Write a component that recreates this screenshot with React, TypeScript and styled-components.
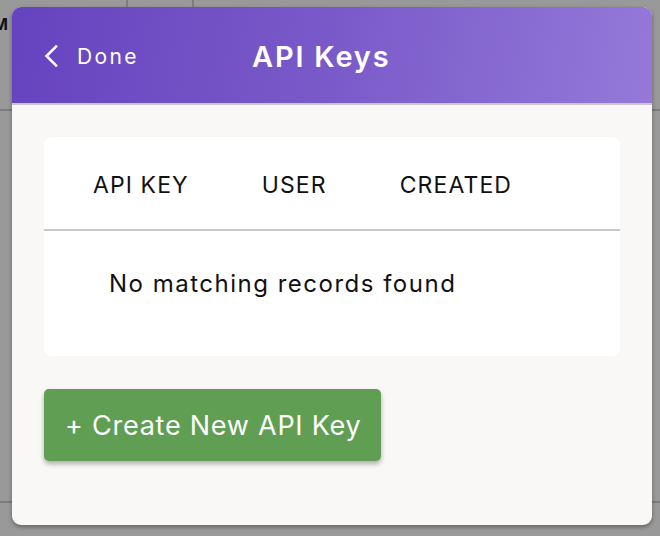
import React from "react";
import styled, { createGlobalStyle } from "styled-components";

const Global = createGlobalStyle`
  html, body { margin: 0; padding: 0; }
  body {
    width: 660px;
    height: 536px;
    overflow: hidden;
    background: #999999;
    font-family: Inter, "Noto Sans", sans-serif;
  }
`;

const Backdrop = styled.div`
  position: relative;
  width: 660px;
  height: 536px;
  background: #999999;
  overflow: hidden;
`;

const BgRule = styled.div<{ $top: number }>`
  position: absolute;
  left: 0;
  right: 0;
  top: ${(p) => p.$top}px;
  height: 2px;
  background: #7d7d7d;
`;

const BgCol = styled.div<{ $left: number }>`
  position: absolute;
  top: 0;
  left: ${(p) => p.$left}px;
  width: 2px;
  height: 10px;
  background: #7d7d7d;
`;

const BgLetter = styled.div`
  position: absolute;
  left: -7px;
  top: 14px;
  font-family: Inter, sans-serif;
  font-weight: 700;
  font-size: 16px;
  color: #111;
`;

const Modal = styled.div`
  position: absolute;
  left: 12px;
  top: 7px;
  width: 640px;
  height: 518px;
  border-radius: 9px;
  overflow: hidden;
  background: #f9f8f6;
  box-shadow: 0 2px 4px rgba(0, 0, 0, 0.35);
  display: flex;
  flex-direction: column;
`;

const Header = styled.header`
  height: 98px;
  flex-shrink: 0;
  box-sizing: border-box;
  border-bottom: 2px solid #c9c7cc;
  background: linear-gradient(100deg, #6643bf 0%, #7a5ac9 50%, #9479d9 100%);
  display: flex;
  align-items: center;
  padding: 2px 0 0 31px;
  color: #fff;
`;

const BackButton = styled.button`
  display: flex;
  align-items: center;
  gap: 18px;
  background: none;
  border: none;
  padding: 0;
  color: #fff;
  font-family: Inter, sans-serif;
  font-size: 21px;
  letter-spacing: 2.4px;
  cursor: pointer;
`;

const Title = styled.h1`
  margin: 0 0 0 113px;
  font-family: Inter, sans-serif;
  font-size: 29px;
  font-weight: 600;
  letter-spacing: 1.8px;
  color: #fff;
`;

const Body = styled.main`
  flex: 1;
  padding: 32px 32px 0 32px;
  display: flex;
  flex-direction: column;
  align-items: flex-start;
  gap: 33px;
`;

const Card = styled.section`
  align-self: stretch;
  background: #ffffff;
  border-radius: 8px;
  height: 219px;
`;

const HeadRow = styled.div`
  display: flex;
  align-items: center;
  height: 94px;
  padding: 3px 0 0 49px;
  box-sizing: border-box;
  gap: 73px;
  border-bottom: 2px solid #c8c8c8;
`;

const HeadCell = styled.div`
  font-family: Inter, sans-serif;
  font-size: 23px;
  font-weight: 400;
  letter-spacing: 1.1px;
  color: #111;
`;

const EmptyRow = styled.div`
  padding: 38px 0 0 65px;
  font-family: Inter, sans-serif;
  font-size: 24px;
  letter-spacing: 1.5px;
  color: #111;
`;

const CreateButton = styled.button`
  height: 72px;
  padding: 0 20px 0 21px;
  border: none;
  border-radius: 5px;
  background: #5f9e53;
  color: #fff;
  font-family: Inter, sans-serif;
  font-size: 27px;
  letter-spacing: 0.75px;
  box-shadow: 0 3px 5px rgba(0, 0, 0, 0.3);
  cursor: pointer;
`;

const Chevron = () => (
  <svg width="16" height="24" viewBox="0 0 16 24" fill="none">
    <path d="M13 2.5 L3.5 12 L13 21.5" stroke="#fff" strokeWidth="2.6" strokeLinecap="square" />
  </svg>
);

export default function App() {
  return (
    <>
      <Global />
      <Backdrop>
        <BgLetter>M</BgLetter>
        <BgCol $left={126} />
        <BgCol $left={192} />
        <BgRule $top={109} />
        <BgRule $top={501} />
        <Modal>
          <Header>
            <BackButton>
              <Chevron />
              Done
            </BackButton>
            <Title>API Keys</Title>
          </Header>
          <Body>
            <Card>
              <HeadRow>
                <HeadCell>API KEY</HeadCell>
                <HeadCell>USER</HeadCell>
                <HeadCell>CREATED</HeadCell>
              </HeadRow>
              <EmptyRow>No matching records found</EmptyRow>
            </Card>
            <CreateButton>+ Create New API Key</CreateButton>
          </Body>
        </Modal>
      </Backdrop>
    </>
  );
}
